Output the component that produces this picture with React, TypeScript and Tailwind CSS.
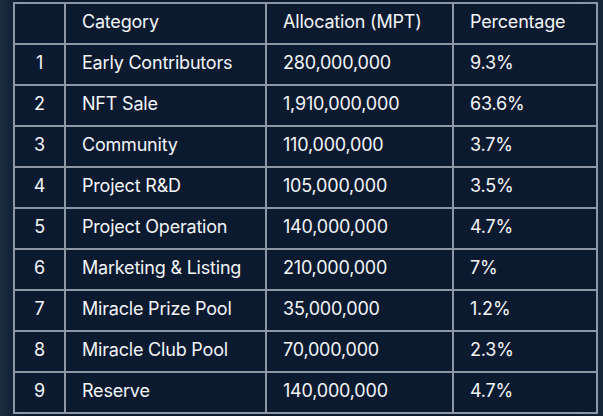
import React from "react";

const rows: [string, string, string, string][] = [
  ["1", "Early Contributors", "280,000,000", "9.3%"],
  ["2", "NFT Sale", "1,910,000,000", "63.6%"],
  ["3", "Community", "110,000,000", "3.7%"],
  ["4", "Project R&D", "105,000,000", "3.5%"],
  ["5", "Project Operation", "140,000,000", "4.7%"],
  ["6", "Marketing & Listing", "210,000,000", "7%"],
  ["7", "Miracle Prize Pool", "35,000,000", "1.2%"],
  ["8", "Miracle Club Pool", "70,000,000", "2.3%"],
  ["9", "Reserve", "140,000,000", "4.7%"],
];

export default function App() {
  return (
    <div className="w-[603px] h-[416px] overflow-hidden bg-[linear-gradient(90deg,#1b2b40_0%,#0c1a2e_4%,#0b182b_50%,#0c1a2e_95%,#17273b_100%)] pt-[2px] pl-[13px] font-['Inter',sans-serif] text-[#f3f5f8]">
      <table className="w-[583px] border-collapse border-2 border-[#8d97a6] bg-[#0c1a2f] text-[18px] leading-none tracking-[-0.2px] table-fixed">
        <colgroup>
          <col className="w-[51px]" />
          <col className="w-[201px]" />
          <col className="w-[187px]" />
          <col className="w-[144px]" />
        </colgroup>
        <thead>
          <tr className="h-[41px]">
            <th className="border-2 border-[#8d97a6] font-normal"></th>
            <th className="border-2 border-[#8d97a6] font-normal text-left pl-[16px] pb-[3px]">Category</th>
            <th className="border-2 border-[#8d97a6] font-normal text-left pl-[16px] pb-[3px]">Allocation (MPT)</th>
            <th className="border-2 border-[#8d97a6] font-normal text-left pl-[16px] pb-[3px]">Percentage</th>
          </tr>
        </thead>
        <tbody>
          {rows.map((r) => (
            <tr key={r[0]} className="h-[41px]">
              <td className="border-2 border-[#8d97a6] text-center pb-[3px]">{r[0]}</td>
              <td className="border-2 border-[#8d97a6] pl-[16px] pb-[3px]">{r[1]}</td>
              <td className="border-2 border-[#8d97a6] pl-[16px] pb-[3px]">{r[2]}</td>
              <td className="border-2 border-[#8d97a6] pl-[16px] pb-[3px]">{r[3]}</td>
            </tr>
          ))}
        </tbody>
      </table>
    </div>
  );
}
